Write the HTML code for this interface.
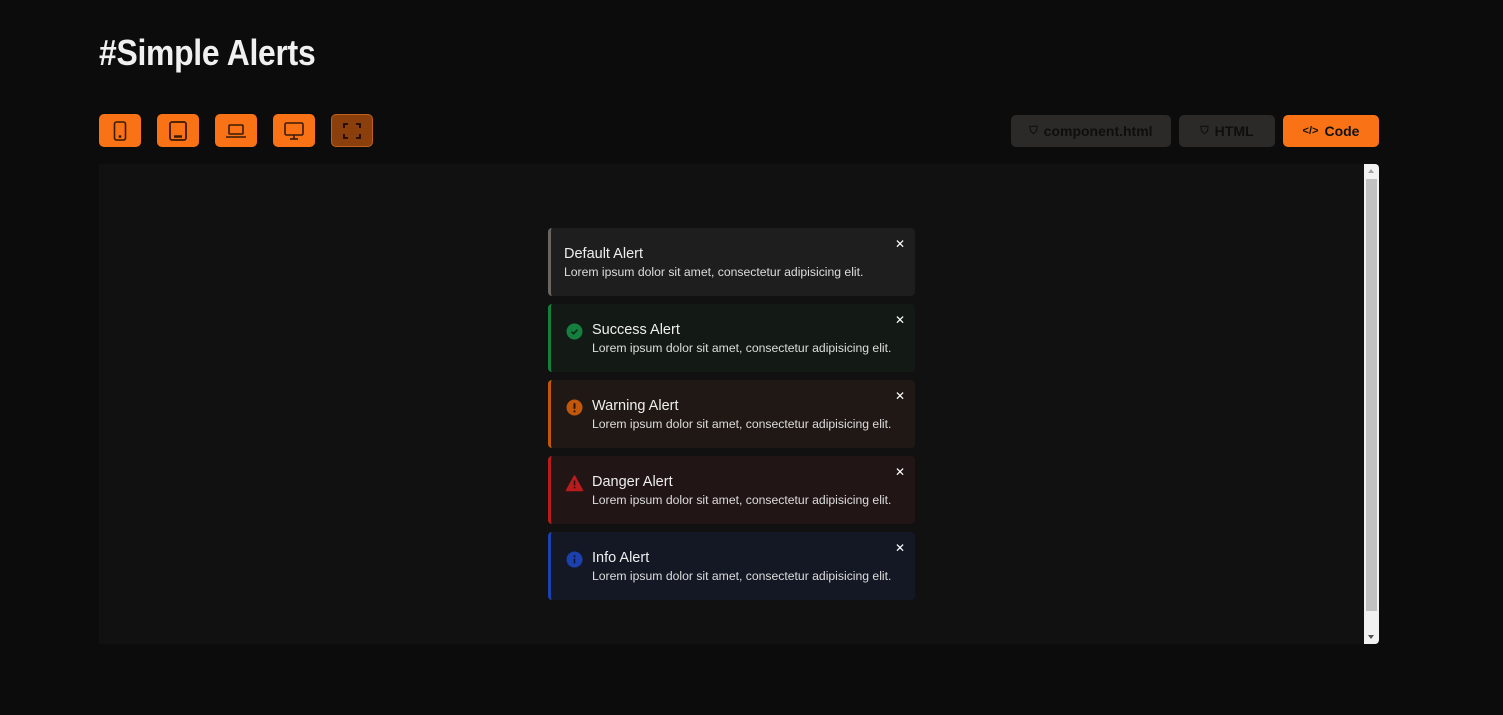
<!DOCTYPE html>
<html><head><meta charset="utf-8"><style>
*{box-sizing:border-box;margin:0;padding:0}
body{width:1503px;height:715px;background:#0c0c0c;font-family:"Liberation Sans",sans-serif;position:relative;overflow:hidden}
h1{position:absolute;left:99px;top:32px;color:#f0f0f0;font-size:36px;font-weight:bold;transform:scaleX(.885);transform-origin:left;letter-spacing:-.3px}
.tb{position:absolute;top:114px;width:42px;height:33px;background:#f97316;border-radius:5px;display:flex;align-items:center;justify-content:center}
.tb.act{background:#8a3f0c;border:1px solid #c0601a}
.rb{position:absolute;top:115px;height:32px;border-radius:5px;display:flex;align-items:center;justify-content:center;font-weight:bold;font-size:14px;gap:6px}
.rb.g{background:#2c2a28;color:#0e0e0e}
.rb.o{background:#f97316;color:#111}
.frame{position:absolute;left:99px;top:164px;width:1280px;height:480px;background:#111}
.sb{position:absolute;left:1364px;top:164px;width:15px;height:480px;background:#f1f1f1;border-radius:0 4px 4px 0}
.th{position:absolute;left:2px;top:15px;width:11px;height:432px;background:#c1c1c1}
.al{position:absolute;left:548px;width:367px;height:68px;border-radius:4px;border-left:3px solid;color:#eee}
.al .t{position:absolute;left:41px;top:18px;font-size:14.5px}
.al .d{position:absolute;left:41px;top:37px;font-size:12.2px;color:#ddd}
.al .x{position:absolute;right:10px;top:9px;font-size:12px;color:#fff}
.al .i{position:absolute;left:15px;top:19px;width:17px;height:17px}
</style></head><body>
<h1>#Simple Alerts</h1>
<div class="tb" style="left:99px"><svg width="16" height="22" viewBox="0 0 16 22" fill="none" stroke="#3a1a05" stroke-width="1.6"><rect x="2.5" y="2" width="11" height="18" rx="2"/><circle cx="8" cy="16.5" r=".6" fill="#3a1a05"/></svg></div>
<div class="tb" style="left:157px"><svg width="20" height="22" viewBox="0 0 20 22" fill="none" stroke="#3a1a05" stroke-width="1.8"><rect x="2" y="2" width="16" height="18" rx="2"/><line x1="6" y1="16.5" x2="14" y2="16.5" stroke-width="2.5"/></svg></div>
<div class="tb" style="left:215px"><svg width="22" height="16" viewBox="0 0 22 16" fill="none" stroke="#3a1a05" stroke-width="1.6"><rect x="4" y="2" width="14" height="9" rx="1"/><line x1="1" y1="14" x2="21" y2="14"/></svg></div>
<div class="tb" style="left:273px"><svg width="22" height="20" viewBox="0 0 22 20" fill="none" stroke="#3a1a05" stroke-width="1.6"><rect x="2" y="2" width="18" height="12" rx="1.5"/><line x1="11" y1="14" x2="11" y2="18"/><line x1="7" y1="18" x2="15" y2="18"/></svg></div>
<div class="tb act" style="left:331px"><svg width="20" height="20" viewBox="0 0 20 20" fill="none" stroke="#1a0a02" stroke-width="1.8"><path d="M2 7V3h4M14 3h4v4M18 13v4h-4M6 17H2v-4"/></svg></div>
<div class="rb g" style="left:1011px;width:160px"><span style="font-size:11px">⛉</span>component.html</div>
<div class="rb g" style="left:1179px;width:96px"><span style="font-size:11px">⛉</span>HTML</div>
<div class="rb o" style="left:1283px;width:96px"><span style="font-size:11px">&lt;/&gt;</span>Code</div>
<div class="frame"></div>
<div class="sb"><div class="th"></div><div style="position:absolute;left:4px;top:5px;border:3.5px solid transparent;border-bottom:4px solid #a3a3a3;border-top:0"></div><div style="position:absolute;left:4px;bottom:5px;border:3.5px solid transparent;border-top:4px solid #505050;border-bottom:0"></div></div>

<div class="al" style="top:228px;background:#1e1e1e;border-color:#6b6561"><div class="t" style="left:13px">Default Alert</div><div class="d" style="left:13px">Lorem ipsum dolor sit amet, consectetur adipisicing elit.</div><div class="x">✕</div></div>
<div class="al" style="top:304px;background:#131a16;border-color:#15803d"><svg class="i" viewBox="0 0 17 17"><circle cx="8.5" cy="8.5" r="8" fill="#15803d"/><path d="M5.5 8.7l2 2 4-4" stroke="#0d2a18" stroke-width="1.6" fill="none"/></svg><div class="t">Success Alert</div><div class="d">Lorem ipsum dolor sit amet, consectetur adipisicing elit.</div><div class="x">✕</div></div>
<div class="al" style="top:380px;background:#201814;border-color:#c2570c"><svg class="i" viewBox="0 0 17 17"><circle cx="8.5" cy="8.5" r="8" fill="#c2570c"/><rect x="7.5" y="4" width="2" height="6" rx="1" fill="#2a1508"/><circle cx="8.5" cy="12.3" r="1.1" fill="#2a1508"/></svg><div class="t">Warning Alert</div><div class="d">Lorem ipsum dolor sit amet, consectetur adipisicing elit.</div><div class="x">✕</div></div>
<div class="al" style="top:456px;background:#221515;border-color:#b91c1c"><svg class="i" viewBox="0 0 17 17" style="width:19px;left:14px"><path d="M8.5 1L16.5 15.5H0.5Z" fill="#b91c1c" stroke="#b91c1c" stroke-linejoin="round" stroke-width="1.5"/><rect x="7.7" y="5.5" width="1.6" height="5" fill="#2a0d0d"/><circle cx="8.5" cy="12.6" r=".9" fill="#2a0d0d"/></svg><div class="t">Danger Alert</div><div class="d">Lorem ipsum dolor sit amet, consectetur adipisicing elit.</div><div class="x">✕</div></div>
<div class="al" style="top:532px;background:#131824;border-color:#1d40af"><svg class="i" viewBox="0 0 17 17"><circle cx="8.5" cy="8.5" r="8" fill="#1d40af"/><rect x="7.7" y="7.5" width="1.6" height="5" fill="#0d1630"/><circle cx="8.5" cy="5.2" r="1" fill="#0d1630"/></svg><div class="t">Info Alert</div><div class="d">Lorem ipsum dolor sit amet, consectetur adipisicing elit.</div><div class="x">✕</div></div>
</body></html>
